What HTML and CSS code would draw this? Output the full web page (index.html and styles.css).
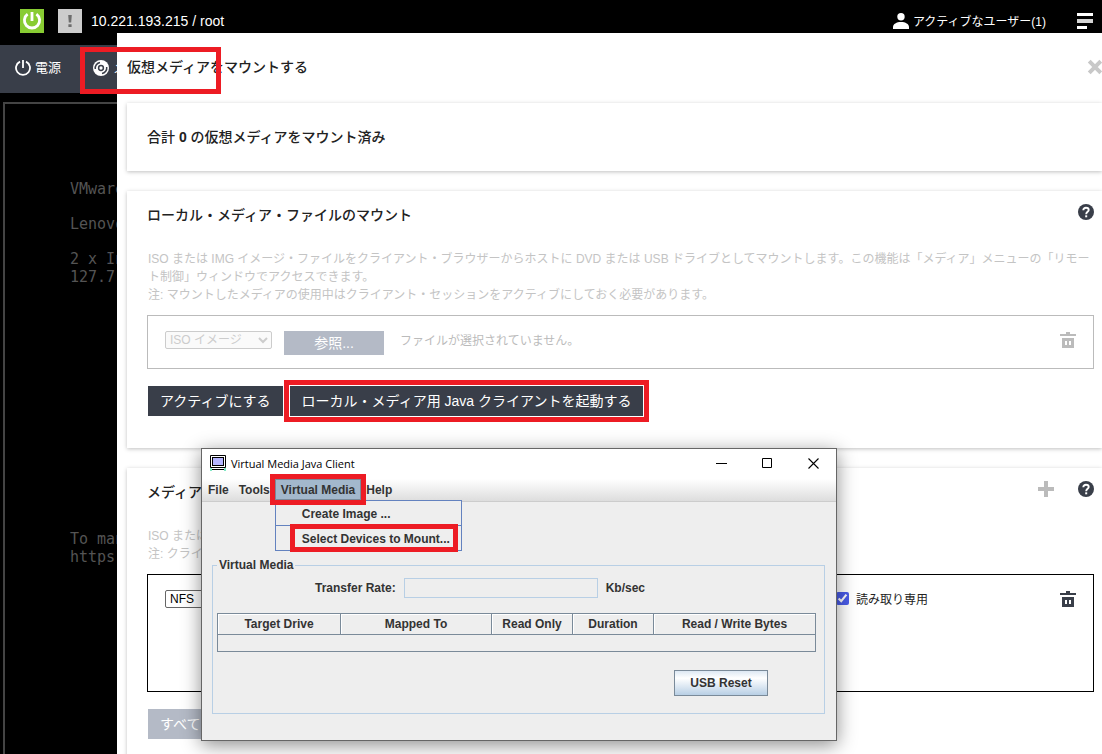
FILE: index.html
```
<!DOCTYPE html>
<html lang="ja">
<head>
    <meta charset="UTF-8">
    <meta name="viewport" content="width=device-width, initial-scale=1.0">
    <title>仮想メディアをマウントする</title>
    <link rel="stylesheet" href="styles.css">
</head>
<body>
    <svg class="defs" width="0" height="0">
        <symbol id="trash" viewBox="0 0 16 16">
            <path d="M0 2h6V0h4v2h6v2H0z"/>
            <path fill-rule="evenodd" d="M2 6h12v10H2zM5 9v4h2V9zM9 9v4h2V9z"/>
        </symbol>
        <symbol id="help" viewBox="0 0 16 16">
            <circle cx="8" cy="8" r="8"/>
            <path d="M5.300 6.300C5.300 4.600 6.400 3.800 8 3.800s2.700.9 2.700 2.200C10.700 7.800 8.200 7.900 8.200 10.200" fill="none" stroke="#fff" stroke-width="1.900"/>
            <rect x="7.200" y="11.300" width="2" height="2" fill="#fff"/>
        </symbol>
        <symbol id="power" viewBox="0 0 16 16">
            <path d="M5 1.600a7 7 0 1 0 6 0M8 0v8" fill="none" stroke="currentColor" stroke-width="1.800"/>
        </symbol>
    </svg>

    <header class="topbar">
        <span class="status status-on"><svg viewBox="0 0 24 24"><path d="M7.600 5.200a7.600 7.600 0 1 0 8.800 0M12 3v9" fill="none" stroke="#fff" stroke-width="2.800"/></svg></span>
        <span class="status status-alert"><svg viewBox="0 0 24 24"><path d="M10.200 6h3.600l-.6 7.500h-2.400zM10.400 15.200h3.200v2.800h-3.200z" fill="#6d6d6d"/></svg></span>
        <span class="host">10.221.193.215 / root</span>
        <span class="users">
            <svg width="16" height="16" viewBox="0 0 16 16" fill="#fff"><circle cx="8" cy="3.700" r="3.700"/><path d="M0 16v-2c0-3 3.500-5 8-5s8 2 8 5v2z"/></svg>
            アクティブなユーザー(1)
        </span>
        <button type="button" class="icon-button" aria-label="メニュー">
            <svg width="16" height="16" viewBox="0 0 16 16" fill="#fff"><path d="M0 0h16v3H0zM0 13h10v3H0z"/><path d="M0 6h16v4H0z" fill="#d4d4d4"/></svg>
        </button>
    </header>

    <nav class="toolbar">
        <button type="button" class="tool"><svg width="16" height="16"><use href="#power"/></svg>電源</button>
        <button type="button" class="tool">
            <svg width="16" height="16" viewBox="0 0 16 16"><circle cx="8" cy="8" r="8" fill="#fff"/><g fill="none" stroke="#393e49" stroke-width="1.500"><circle cx="8" cy="8" r="2.400"/><path d="M2.300 9A5.700 5.700 0 0 1 7 2.500M13.700 7A5.700 5.700 0 0 1 9 13.500"/></g></svg>
            メディア
        </button>
    </nav>

    <main class="console">
        <p>VMware</p>
        <p>Lenovo</p>
        <p>2 x Intel<br>127.7 GiB</p>
        <p class="console-foot">To manage<br>https://</p>
    </main>

    <section class="panel">
        <div class="panel-head">
            <h1>仮想メディアをマウントする</h1>
            <button type="button" class="icon-button close" aria-label="閉じる">
                <svg width="16" height="16" viewBox="0 0 16 16"><path d="M2.200 2.200l11.600 11.600M13.800 2.200L2.200 13.800" stroke="#c8c8c8" stroke-width="4"/></svg>
            </button>
        </div>

        <div class="card summary">
            <h2>合計 <b>0</b> の仮想メディアをマウント済み</h2>
        </div>

        <div class="card">
            <div class="card-head">
                <h2>ローカル・メディア・ファイルのマウント</h2>
                <button type="button" class="icon-button" aria-label="ヘルプ"><svg width="16" height="16"><use href="#help"/></svg></button>
            </div>
            <p class="note">ISO または IMG イメージ・ファイルをクライアント・ブラウザーからホストに DVD または USB ドライブとしてマウントします。この機能は「メディア」メニューの「リモート制御」ウィンドウでアクセスできます。<br>注: マウントしたメディアの使用中はクライアント・セッションをアクティブにしておく必要があります。</p>
            <div class="media-box disabled">
                <select class="media-type" aria-label="メディア種別" disabled><option>ISO イメージ</option></select>
                <button type="button" class="btn btn-muted browse" disabled>参照...</button>
                <span class="file-name">ファイルが選択されていません。</span>
                <button type="button" class="icon-button trash" aria-label="削除" disabled><svg width="16" height="16"><use href="#trash"/></svg></button>
            </div>
            <div class="actions">
                <button type="button" class="btn">アクティブにする</button>
                <button type="button" class="btn marked">ローカル・メディア用 Java クライアントを起動する</button>
            </div>
        </div>

        <div class="card">
            <div class="card-head">
                <h2>メディア</h2>
                <button type="button" class="icon-button plus" aria-label="追加"><svg width="16" height="16" viewBox="0 0 16 16"><path d="M6 0h4v6h6v4h-6v6H6v-6H0V6h6z"/></svg></button>
                <button type="button" class="icon-button" aria-label="ヘルプ"><svg width="16" height="16"><use href="#help"/></svg></button>
            </div>
            <p class="note">ISO または<br>注: クライ</p>
            <div class="media-box remote">
                <select class="media-type" aria-label="プロトコル"><option>NFS</option></select>
                <label class="readonly"><input type="checkbox" checked>読み取り専用</label>
                <button type="button" class="icon-button trash" aria-label="削除"><svg width="16" height="16"><use href="#trash"/></svg></button>
            </div>
            <div class="actions">
                <button type="button" class="btn btn-muted" disabled>すべて</button>
            </div>
        </div>
    </section>

    <div class="mark mark-title"></div>

    <section class="client">
        <div class="client-title">
            <svg width="16" height="16" viewBox="0 0 16 16"><rect width="16" height="13" rx="1"/><rect x="1" y="1" width="14" height="11" fill="#fff"/><rect x="2" y="2" width="12" height="9"/><rect x="3" y="3" width="10" height="7" fill="#b5b5ff"/><path d="M1 14h14v1H1z"/><path d="M0 13h2v3H0zM14 13h2v3h-2z" fill="#7fe8c4"/></svg>
            <span class="client-name">Virtual Media Java Client</span>
            <button type="button" class="icon-button" aria-label="Minimize"><svg width="11" height="11" viewBox="0 0 11 11"><path d="M0 5.500h11" stroke="#000"/></svg></button>
            <button type="button" class="icon-button" aria-label="Maximize"><svg width="11" height="11" viewBox="0 0 11 11"><path d="M.5.5h9v9h-9z" fill="none" stroke="#000"/></svg></button>
            <button type="button" class="icon-button" aria-label="Close"><svg width="11" height="11" viewBox="0 0 11 11"><path d="M.5.5l10 10M10.500.5l-10 10" stroke="#000" stroke-width="1.100"/></svg></button>
        </div>
        <div class="menubar">
            <button type="button">File</button>
            <button type="button">Tools</button>
            <div class="menu">
                <button type="button" class="open marked">Virtual Media</button>
                <div class="menu-list">
                    <button type="button">Create Image ...</button>
                    <button type="button" class="marked mark-item">Select Devices to Mount...</button>
                </div>
            </div>
            <button type="button">Help</button>
        </div>
        <fieldset>
            <legend>Virtual Media</legend>
            <div class="rate">
                <label for="rate">Transfer Rate:</label>
                <input type="text" id="rate" readonly>
                <span>Kb/sec</span>
            </div>
            <table>
                <colgroup><col class="col-drive"><col class="col-mapped"><col class="col-short"><col class="col-short"><col></colgroup>
                <thead>
                    <tr><th>Target Drive</th><th>Mapped To</th><th>Read Only</th><th>Duration</th><th>Read / Write Bytes</th></tr>
                </thead>
                <tbody>
                    <tr><td colspan="5"></td></tr>
                </tbody>
            </table>
            <button type="button" class="usb-reset">USB Reset</button>
        </fieldset>
    </section>
</body>
</html>
```
FILE: styles.css
```
* {
    box-sizing: border-box;
}
body {
    position: relative;
    display: flex;
    flex-direction: column;
    min-height: 100vh;
    margin: 0;
    overflow: hidden;
    background-color: #000;
    color: #222;
    font-family: "Liberation Sans", "Noto Sans CJK JP", sans-serif;
    font-size: 12px;
}
h1, h2, p {
    margin: 0;
}
button, input, select {
    font-family: inherit;
    margin: 0;
}
svg {
    display: block;
    flex: none;
}
.defs {
    position: absolute;
}
.icon-button {
    display: block;
    flex: none;
    padding: 0;
    border: none;
    background: none;
    fill: #393e49;
}

/* top bar */
.topbar {
    display: flex;
    align-items: center;
    height: 45px;
    padding: 0 9px 4px 20px;
    color: #fff;
}
.status {
    width: 24px;
    height: 24px;
    margin-right: 14px;
}
.status-on {
    background-color: #8c3;
}
.status-alert {
    background-color: #ccc;
    margin-right: 9px;
}
.host {
    font-size: 14px;
}
.users {
    display: flex;
    align-items: center;
    gap: 4px;
    margin-left: auto;
    margin-right: 31px;
}
.toolbar {
    display: flex;
    gap: 32px;
    height: 48px;
    padding: 0 15px 2px;
    background-color: #393e49;
}
.tool {
    display: flex;
    align-items: center;
    gap: 4px;
    padding: 0;
    border: none;
    background: none;
    color: #fff;
    font-size: 13px;
    line-height: 16px;
}

/* remote console */
.console {
    flex: 1;
    margin: 9px 0 0 3px;
    padding: 76px 0 0 65px;
    border: 2px solid #444;
    border-bottom: none;
    color: #545454;
    font-family: "DejaVu Sans Mono", monospace;
    font-size: 15px;
    line-height: 18px;
}
.console p {
    margin-bottom: 17px;
}
.console .console-foot {
    margin-top: 244px;
}

/* drawer */
.panel {
    position: absolute;
    top: 33px;
    right: 0;
    bottom: 0;
    left: 117px;
    padding-left: 10px;
    overflow: hidden;
    background-color: #fff;
}
.panel-head {
    display: flex;
    align-items: center;
    justify-content: space-between;
    height: 70px;
    padding-bottom: 2px;
}
h1, h2 {
    flex: 1;
    font-size: 14px;
    font-weight: 500;
    line-height: 20px;
}
.close {
    margin-right: -1px;
}
.card {
    margin-bottom: 20px;
    padding: 14px 8px 32px 20px;
    background-color: #fff;
    box-shadow: 0 1px 4px rgba(0, 0, 0, 0.25);
}
.summary {
    padding: 24px 20px;
}
.card-head {
    display: flex;
    align-items: flex-start;
    gap: 24px;
}
.card-head .icon-button {
    margin-top: -1px;
}
.plus {
    fill: #bbb;
}
.note {
    margin-top: 25px;
    padding-left: 1px;
    color: #c4c4c4;
    line-height: 18px;
}
.media-box {
    display: flex;
    align-items: flex-start;
    margin-top: 11px;
    padding: 15px 17px 13px;
    border: 1px solid #000;
}
.disabled {
    border-color: #bbb;
    color: #bbb;
}
.disabled .trash {
    fill: #bbb;
}
.remote {
    height: 118px;
}
.trash {
    margin-top: 1px;
}
.media-type {
    width: 107px;
    height: 18px;
    border: 1px solid #666;
    border-radius: 2px;
    background-color: #fff;
    color: #000;
    font-size: 12px;
    padding: 0;
}
.media-type:disabled {
    border-color: #ccc;
    background-color: #fafafa;
    color: #ccc;
    opacity: 1;
}
.btn {
    height: 30px;
    padding: 0 12px 2px;
    border: none;
    background-color: #393e49;
    color: #fff;
    font-size: 14px;
}
.btn-muted {
    background-color: #b4bac6;
}
.browse {
    width: 100px;
    height: 24px;
    margin: 0 16px 0 12px;
}
.file-name {
    flex: 1;
    line-height: 20px;
}
.readonly {
    display: flex;
    align-items: center;
    gap: 7px;
    margin-left: auto;
    margin-right: 132px;
}
.readonly input {
    width: 13px;
    height: 13px;
    accent-color: #4a5ce8;
}
.actions {
    display: flex;
    gap: 7px;
    margin-top: 17px;
    padding-left: 1px;
}

/* red callouts */
.mark, .marked::after {
    position: absolute;
    border: 5px solid #ed1c24;
    pointer-events: none;
}
.marked {
    position: relative;
}
.marked::after {
    content: "";
    inset: -6px;
}
.mark-title {
    top: 47px;
    left: 80px;
    width: 141px;
    height: 47px;
}

/* java client window */
.client {
    position: absolute;
    top: 448px;
    left: 201px;
    width: 636px;
    height: 293px;
    border: 1px solid #666;
    background-color: #eee;
    box-shadow: 0 4px 18px rgba(0, 0, 0, 0.45);
    color: #333;
    font-weight: bold;
}
.client button {
    font-size: 12px;
    font-weight: bold;
    color: #333;
}
.client-title {
    display: flex;
    align-items: center;
    gap: 35px;
    height: 30px;
    padding: 0 17px 2px 8px;
    background-color: #fff;
}
.client-name {
    flex: 1;
    margin-left: -30px;
    color: #000;
    font-family: "Open Sans", sans-serif;
    font-size: 11px;
    font-weight: normal;
}
.menubar {
    display: flex;
    height: 23px;
    padding-left: 1px;
    border-bottom: 1px solid #ccc;
    background: linear-gradient(#fff, #ddd);
}
.menubar button {
    height: 21px;
    padding: 0 5px;
    border: none;
    background: none;
}
.menu {
    position: relative;
}
.menubar .open {
    border: 1px solid #7a8a99;
    background-color: #a3b8cc;
}
.open.marked {
    z-index: 1;
}
.menu-list {
    position: absolute;
    top: 21px;
    left: 0;
    width: 187px;
    border: 1px solid #6382bf;
    background-color: #eee;
}
.menu-list button {
    display: block;
    width: 100%;
    height: 24px;
    padding: 2px 0 0 26px;
    text-align: left;
}
.menu-list button + button {
    height: 25px;
    border-top: 1px solid #6382bf;
}
.menu-list .mark-item::after {
    inset: -2px 3px -2px 14px;
}
fieldset {
    height: 156px;
    margin: 56px 11px 0 10px;
    padding: 6px 8px 0 4px;
    border: 1px solid #b8cfe5;
}
legend {
    padding: 0 2px;
    line-height: 14px;
}
.rate {
    display: flex;
    align-items: center;
    justify-content: center;
    gap: 8px;
    margin-right: 73px;
}
.rate input {
    width: 194px;
    height: 20px;
    border: 1px solid #b8cfe5;
    background-color: #eee;
}
table {
    width: 100%;
    margin-top: 15px;
    border-collapse: collapse;
    table-layout: fixed;
}
th, td {
    height: 21px;
    padding: 0;
    border: 1px solid #7a8a99;
    box-shadow: inset 1px 1px #fff;
}
td {
    height: 17px;
    box-shadow: none;
}
.col-drive {
    width: 123px;
}
.col-mapped {
    width: 151px;
}
.col-short {
    width: 81px;
}
.usb-reset {
    display: block;
    width: 94px;
    height: 26px;
    margin: 18px 48px 0 auto;
    padding: 0;
    border: 1px solid #7a8a99;
    background: linear-gradient(#dde8f3, #fff 30%, #b8cfe5);
}
```
